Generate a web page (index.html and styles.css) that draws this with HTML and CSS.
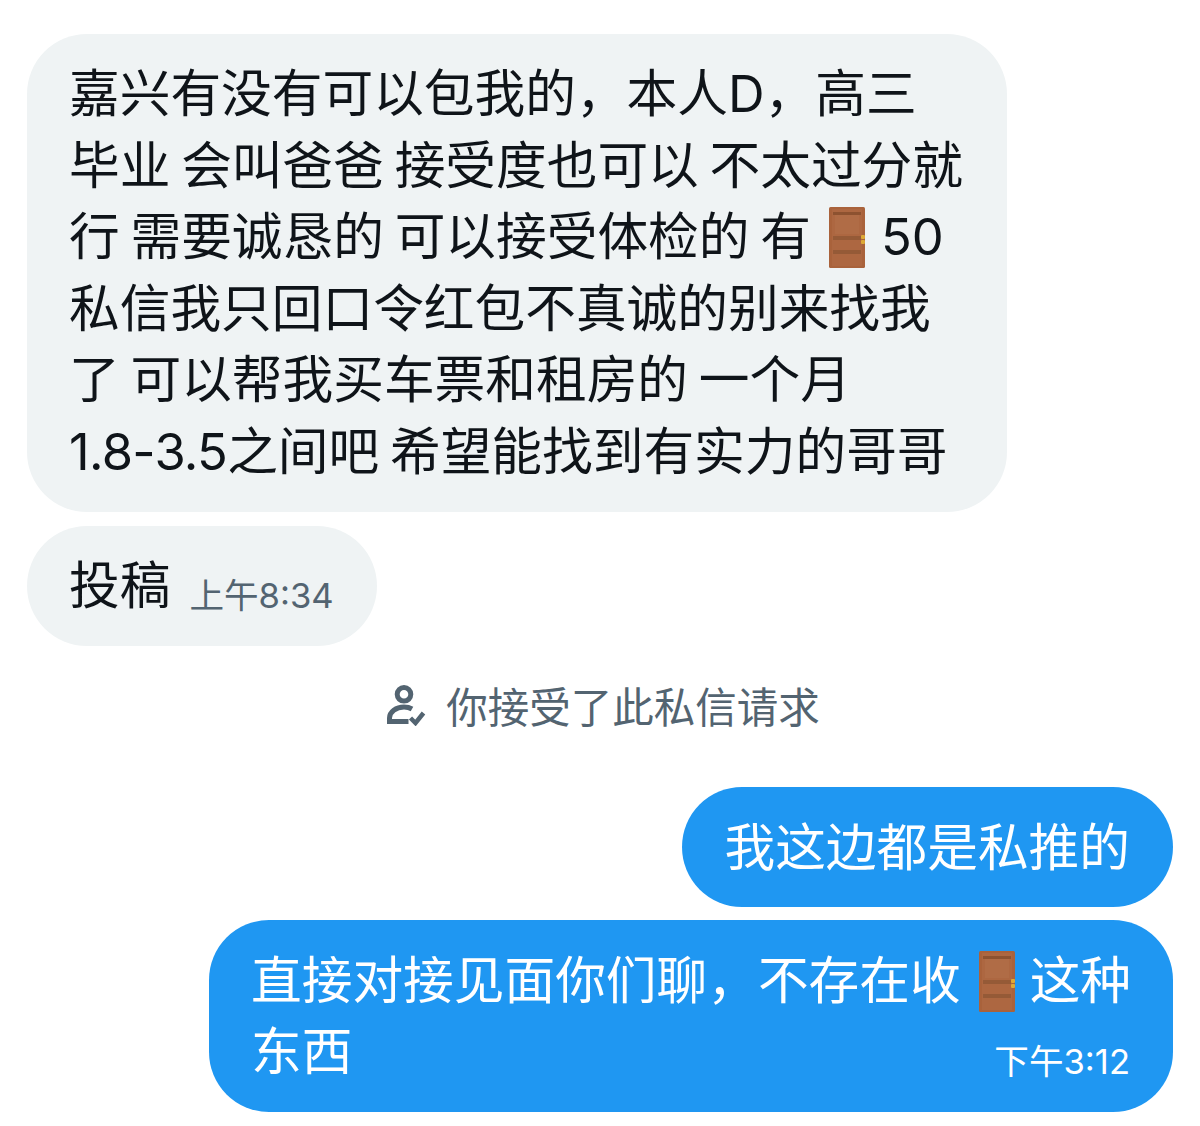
FILE: index.html
```html
<!DOCTYPE html>
<html lang="zh-CN">
<head>
    <meta charset="UTF-8">
    <meta name="viewport" content="width=device-width, initial-scale=1.0">
    <title>私信</title>
    <link rel="stylesheet" href="styles.css">
</head>
<body>
    <svg class="sprites" width="0" height="0">
        <symbol id="door" viewBox="0 0 36 61">
            <rect width="36" height="61" rx="1.5" fill="#a9623b"/>
            <rect x="3" y="2" width="30" height="57" fill="#ad6741"/>
            <rect x="4" y="5" width="28" height="3" fill="#8d5230"/>
            <rect x="6" y="8" width="24" height="19" fill="#b06c46"/>
            <rect x="4" y="29" width="28" height="4" fill="#955a37"/>
            <rect x="4" y="43" width="28" height="4" fill="#955a37"/>
            <rect x="32" y="28" width="4" height="4" rx="1" fill="#dda936"/>
            <rect x="32" y="33" width="4" height="4" rx="1" fill="#dda936"/>
        </symbol>
    </svg>

    <div class="chat">
        <div class="bubble bubble-in bubble-long">嘉兴有没有可以包我的，本人D，高三<br>毕业 会叫爸爸 接受度也可以 不太过分就<br>行 需要诚恳的 可以接受体检的 有<svg class="door"><use href="#door"/></svg>50<br>私信我只回口令红包不真诚的别来找我<br>了 可以帮我买车票和租房的 一个月<br><span class="range">1.8-3.5</span>之间吧 希望能找到有实力的哥哥</div>

        <div class="bubble bubble-in bubble-short">投稿<span class="time">上午8:34</span></div>

        <div class="notice">
            <svg class="notice-icon" viewBox="0 0 40 42" fill="none" stroke="#536471" stroke-width="5">
                <circle cx="18" cy="10.300" r="6.800"/>
                <path d="M26 25c-2.500-1.500-5-2-8-2-8 0-14.500 5-14.500 11v3.500h19"/>
                <path d="M24.500 34l5 5 8-10" stroke-width="4.500"/>
            </svg>
            <span>你接受了此私信请求</span>
        </div>

        <div class="bubble bubble-out bubble-short">我这边都是私推的</div>

        <div class="bubble bubble-out bubble-last">直接对接见面你们聊，不存在收<svg class="door"><use href="#door"/></svg>这种<br>东西<span class="time time-out">下午3:12</span></div>
    </div>
</body>
</html>
```

FILE: styles.css
```css
body {
    margin: 0;
    background-color: #fff;
    color: #0f1419;
    font-family: "Inter", "Noto Sans CJK SC", sans-serif;
}

.sprites {
    display: block;
}

.chat {
    display: flex;
    flex-direction: column;
    padding: 34px 27px 14px 27px;
}

.bubble {
    box-sizing: border-box;
    padding: 24px 43px 24px 42px;
    font-size: 50.7px;
    line-height: 71.6px;
    word-spacing: -3.5px;
    white-space: nowrap;
}

.bubble-in {
    align-self: flex-start;
    background-color: #eff3f4;
}

.bubble-out {
    align-self: flex-end;
    padding-top: 25px;
    background-color: #1f97f2;
    color: #fff;
}

.bubble-long {
    width: 980px;
    height: 478px;
    border-radius: 60px;
}

.range {
    letter-spacing: -0.7px;
}

.bubble-short {
    height: 120px;
    border-radius: 60px;
}

.bubble-in.bubble-short {
    margin-top: 14px;
}

.bubble-out.bubble-short {
    margin-top: 57px;
}

.bubble-last {
    position: relative;
    width: 964px;
    height: 192px;
    margin-top: 13px;
    line-height: 71px;
    border-radius: 60px;
}

.time {
    margin-left: 19px;
    font-size: 34.6px;
    color: #536471;
    vertical-align: -4px;
}

.time-out {
    position: absolute;
    right: 43px;
    bottom: 26px;
    line-height: 50px;
    color: #fff;
}

.notice {
    display: flex;
    justify-content: center;
    align-items: center;
    gap: 20px;
    height: 50px;
    margin-top: 34px;
    padding-left: 6px;
    font-size: 41.5px;
    color: #536471;
}

.notice-icon {
    width: 40px;
    height: 42px;
}

.door {
    width: 36px;
    height: 61px;
    margin: 0 16px 0 18px;
    vertical-align: -13px;
}

.bubble-last .door {
    margin-left: 18px;
    margin-right: 15px;
}
```
